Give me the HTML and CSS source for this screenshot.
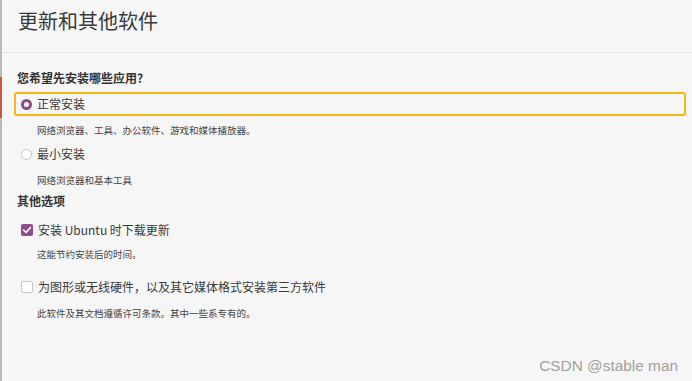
FILE: index.html
```html
<!DOCTYPE html>
<html lang="zh-CN">
<head>
<meta charset="utf-8">
<title>更新和其他软件</title>
<link rel="stylesheet" href="styles.css">
</head>
<body>
<div class="window">
  <div class="edge"><div class="edge-mark"></div></div>
  <div class="main">
    <header class="header"><h1 class="title">更新和其他软件</h1></header>
    <section class="content">
      <div class="heading q">您希望先安装哪些应用?</div>
      <div class="row focus">
        <span class="radio checked"></span>
        <span class="label">正常安装</span>
      </div>
      <div class="desc d1">网络浏览器、工具、办公软件、游戏和媒体播放器。</div>
      <div class="row r2">
        <span class="radio"></span>
        <span class="label">最小安装</span>
      </div>
      <div class="desc d2">网络浏览器和基本工具</div>
      <div class="heading h2">其他选项</div>
      <div class="row r3">
        <span class="check checked">
          <svg viewBox="0 0 12 12" width="12" height="12"><path d="M2.6 6.2 L5 8.5 L9.4 3.6" fill="none" stroke="#fff" stroke-width="1.6" stroke-linecap="round" stroke-linejoin="round"/></svg>
        </span>
        <span class="label">安装 Ubuntu 时下载更新</span>
      </div>
      <div class="desc d3">这能节约安装后的时间。</div>
      <div class="row r4">
        <span class="check"></span>
        <span class="label">为图形或无线硬件，以及其它媒体格式安装第三方软件</span>
      </div>
      <div class="desc d4">此软件及其文档遵循许可条款。其中一些系专有的。</div>
    </section>
    <div class="watermark">CSDN @stable man</div>
  </div>
</div>
</body>
</html>
```

FILE: styles.css
```css
* { box-sizing: border-box; }
html, body { margin: 0; padding: 0; }
body {
  width: 692px;
  height: 381px;
  overflow: hidden;
  background: #f6f6f6;
  font-family: "Noto Sans CJK SC", "Noto Sans", sans-serif;
  color: #3d3d3d;
}
.window {
  display: flex;
  height: 381px;
}
.edge {
  width: 2px;
  background: #bcbcbc;
  padding-top: 77px;
  flex: none;
}
.edge-mark {
  width: 2px;
  height: 41px;
  background: #c8583f;
}
.main {
  flex: 1;
  display: flex;
  flex-direction: column;
}
.header {
  height: 53px;
  border-bottom: 1px solid #e3e3e3;
  padding: 7px 0 0 16px;
}
.title {
  margin: 0;
  font-size: 20px;
  line-height: 28px;
  font-weight: 400;
  color: #3a3a3a;
}
.content {
  display: flex;
  flex-direction: column;
  padding-left: 15px;
}
.heading {
  font-size: 12px;
  font-weight: 700;
  line-height: 16px;
  color: #333;
}
.q { margin-top: 17px; }
.h2 { margin-top: 6px; }
.row {
  display: flex;
  align-items: center;
  height: 20px;
  padding-left: 4px;
  gap: 5px;
}
.label {
  font-size: 12px;
  line-height: 16px;
  color: #3a3a3a;
}
.focus {
  margin-top: 6px;
  margin-left: -3px;
  width: 672px;
  height: 24px;
  border: 2px solid #f7b613;
  border-radius: 3px;
  padding-left: 5px;
}
.r2 { margin-top: 7px; }
.r3 { margin-top: 11px; }
.r4 { margin-top: 16px; }
.desc {
  font-size: 9.5px;
  line-height: 14px;
  color: #444;
  padding-left: 20px;
}
.d1 { margin-top: 7px; }
.d2 { margin-top: 9px; }
.d3 { margin-top: 7px; }
.d4 { margin-top: 9px; }
.radio {
  width: 11px;
  height: 11px;
  border-radius: 50%;
  border: 1px solid #c4c4c4;
  background: #fff;
  flex: none;
}
.radio.checked {
  border: 3px solid #924b89;
  background: #fff;
}
.check {
  width: 12px;
  height: 12px;
  border-radius: 2px;
  border: 1px solid #c6c6c6;
  background: #fff;
  flex: none;
  display: flex;
}
.check.checked {
  border: none;
  background: #8f4c88;
}
.watermark {
  margin-top: auto;
  margin-bottom: 7px;
  align-self: flex-end;
  margin-right: 14px;
  font-family: "Liberation Sans", Arial, sans-serif;
  font-size: 15.4px;
  line-height: 17px;
  color: #a0a0a0;
}
```
